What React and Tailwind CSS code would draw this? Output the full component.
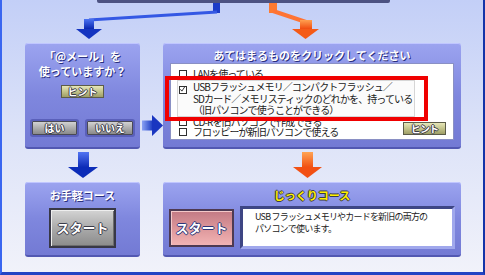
import React from "react";

const whiteShadow = "[text-shadow:1px_1px_0_#2a3080]";
const outlineDark =
  "[text-shadow:1px_0_0_#3a3a48,-1px_0_0_#3a3a48,0_1px_0_#3a3a48,0_-1px_0_#3a3a48]";
const outlineNavy =
  "[text-shadow:1px_0_0_#2c3478,-1px_0_0_#2c3478,0_1px_0_#2c3478,0_-1px_0_#2c3478]";

function Panel({ className, children }) {
  return (
    <div
      className={`relative rounded-[3px] border-b-2 border-[#5258b2] bg-linear-to-b from-[#9ca4f0] via-[#7f87de] to-[#737ad4] shadow-[inset_0_1px_0_#c0c6ff] ${className}`}
    >
      {children}
    </div>
  );
}

function Box({ checked }) {
  return (
    <span className="inline-flex w-[8px] h-[8px] shrink-0 border border-[#303030] bg-white">
      {checked ? (
        <svg viewBox="0 0 8 8" className="w-[6px] h-[6px] overflow-visible">
          <path d="M0.5 3 L2.5 5.5 L6.5 -0.5" stroke="#202020" strokeWidth="1.2" fill="none" />
        </svg>
      ) : null}
    </span>
  );
}

function Item({ children, className }) {
  return (
    <div className={`flex items-center gap-[6px] pl-[8px] ${className}`}>
      <Box />
      <span>{children}</span>
    </div>
  );
}

function SmallButton({ label, className }) {
  return (
    <button
      className={`h-[14px] rounded-[1px] border border-[#4a4a55] bg-linear-to-b from-[#d2d2d2] to-[#8a8a8a] shadow-[0_0_0_2px_#5a60ba] text-white font-bold text-[10px] leading-[12px] ${outlineDark} ${className}`}
    >
      {label}
    </button>
  );
}

function HintButton({ className }) {
  return (
    <button
      className={`w-[43px] h-[13px] border border-[#5c5c48] bg-linear-to-b from-[#e6e6b8] via-[#c4c48c] to-[#9e9e66] text-white font-bold text-[10px] leading-[11px] ${outlineDark} ${className}`}
    >
      ヒント
    </button>
  );
}

export default function App() {
  return (
    <div className="w-[485px] h-[275px] overflow-hidden border-l-2 border-r-2 border-b-[3px] border-l-[#3a66f0] border-r-[#1434a8] border-b-[#2444c4] bg-linear-to-b from-[#c3cff7] via-[#dde3f8] to-[#f1f2fa] font-['Noto_Sans_CJK_JP',sans-serif]">
      {/* connectors from the step above */}
      <div className="h-[43px] flex flex-col">
        <div className="ml-[95px] w-[293px] h-[3px] rounded-b-[2px] bg-[#4c5282]" />
        <svg viewBox="2 3 481 40" width="481" height="40">
          <defs>
            <linearGradient id="bl" x1="0" y1="0" x2="0" y2="1">
              <stop offset="0" stopColor="#4a72f2" />
              <stop offset="1" stopColor="#0a26b0" />
            </linearGradient>
            <linearGradient id="or" x1="0" y1="0" x2="0" y2="1">
              <stop offset="0" stopColor="#ffa050" />
              <stop offset="1" stopColor="#f04c10" />
            </linearGradient>
          </defs>
          <rect x="213" y="3" width="7" height="10" fill="#1c3cc8" />
          <polyline points="217,12 89,20" stroke="#3458e4" strokeWidth="3" fill="none" />
          <rect x="84" y="19" width="10" height="10" fill="url(#bl)" />
          <polygon points="76,29 102,29 89,39" fill="#1434c0" />
          <rect x="269" y="3" width="8" height="10" fill="#ff7a30" />
          <polyline points="273,11 306,22" stroke="#ff7434" strokeWidth="4" fill="none" />
          <rect x="300" y="20" width="12" height="9" fill="url(#or)" />
          <polygon points="292,29 319,29 305.5,39" fill="#f45a18" />
        </svg>
      </div>

      {/* first row */}
      <div className="flex h-[106px] pl-[23px]">
        <Panel className="w-[115px] h-[106px] pt-[6px]">
          <div className={`text-center text-white font-bold text-[11px] leading-[15px] ${whiteShadow}`}>
            「@メール」を
            <br />
            使っていますか？
          </div>
          <HintButton className="block mx-auto mt-[6px]" />
          <div className="flex gap-[10px] pl-[7px] mt-[23px]">
            <SmallButton label="はい" className="w-[45px]" />
            <SmallButton label="いいえ" className="w-[46px]" />
          </div>
        </Panel>

        <div className="w-[23px] pt-[72px] pl-[2px]">
          <svg viewBox="0 0 21 21" width="21" height="21">
            <defs>
              <linearGradient id="ra" x1="0" y1="0" x2="1" y2="0">
                <stop offset="0" stopColor="#8aa2f4" />
                <stop offset="1" stopColor="#1838c0" />
              </linearGradient>
            </defs>
            <rect x="0" y="5.5" width="11" height="10" fill="url(#ra)" />
            <polygon points="10,0 21,10.5 10,21" fill="#1a36c0" />
          </svg>
        </div>

        <Panel className="w-[298px] h-[106px] pt-[5px]">
          <div className={`text-center text-white font-bold text-[11px] leading-[14px] ${whiteShadow}`}>
            あてはまるものをクリックしてください
          </div>
          <div className="mx-[7px] mt-[1px] h-[77px] bg-white border border-[#8a90c4] pt-[4px] text-[10px] tracking-[-0.9px] text-[#1a1a1a]">
            <Item className="leading-[11px]">LANを使っている</Item>
            <div className="ml-[6px] mt-[1px] w-[238px] flex items-start gap-[6px] border border-[#d6d6d6] bg-[#fbfbfb] pl-[1px] leading-[11.5px]">
              <span className="mt-[2px]">
                <Box checked />
              </span>
              <div>
                USBフラッシュメモリ／コンパクトフラッシュ／
                <br />
                SDカード／メモリスティックのどれかを、持っている
                <br />
                （旧パソコンで使うことができる）
              </div>
            </div>
            <div className="flex items-end pr-[7px]">
              <div className="flex-1">
                <Item className="leading-[10px]">CD-Rを旧パソコンで作成できる</Item>
                <Item className="leading-[10px]">フロッピーが新旧パソコンで使える</Item>
              </div>
              <HintButton className="mb-[2px]" />
            </div>
          </div>
          <div className="absolute left-[2px] top-[33px] w-[263px] h-[45px] border-4 border-[#f00000]" />
        </Panel>
      </div>

      {/* down arrows */}
      <svg viewBox="2 149 481 33" width="481" height="33" className="block">
        <defs>
          <linearGradient id="bd" x1="0" y1="0" x2="0" y2="1">
            <stop offset="0" stopColor="#5274f2" />
            <stop offset="1" stopColor="#0a28b4" />
          </linearGradient>
          <linearGradient id="od" x1="0" y1="0" x2="0" y2="1">
            <stop offset="0" stopColor="#ffa454" />
            <stop offset="1" stopColor="#f04c10" />
          </linearGradient>
        </defs>
        <rect x="78" y="152" width="11" height="16" fill="url(#bd)" />
        <polygon points="68,167 98,167 83,178" fill="#0c2cb8" />
        <rect x="302" y="152" width="11" height="16" fill="url(#od)" />
        <polygon points="293,167 322,167 307.5,178" fill="#f25014" />
      </svg>

      {/* second row */}
      <div className="flex h-[75px] pl-[23px]">
        <Panel className="w-[115px] h-[75px] pt-[6px]">
          <div className={`text-center text-white font-bold text-[11px] leading-[14px] ${whiteShadow}`}>
            お手軽コース
          </div>
          <button
            className={`block mx-auto mt-[6px] w-[67px] h-[40px] border-2 border-[#383846] bg-linear-to-b from-[#d4d4d4] via-[#ababab] to-[#8c8c8c] shadow-[inset_1px_1px_0_#eeeeee,inset_-1px_-1px_0_#6c6c6c] text-white font-bold text-[13px] ${outlineDark}`}
          >
            スタート
          </button>
        </Panel>

        <div className="w-[23px]" />

        <Panel className="w-[298px] h-[75px] pt-[6px]">
          <div className={`text-center text-[#fff000] font-bold text-[11px] leading-[14px] ${outlineDark}`}>
            じっくりコース
          </div>
          <div className="flex items-center gap-[6px] px-[6px] mt-[4px]">
            <button
              className={`w-[65px] h-[38px] border-2 border-[#4e3a52] bg-linear-to-b from-[#c27a84] via-[#dc969a] to-[#f2b4b4] shadow-[inset_1px_1px_0_#f4c8c8] text-white font-bold text-[13px] ${outlineNavy}`}
            >
              スタート
            </button>
            <div className="w-[215px] h-[43px] border-[3px] border-t-[#3e4684] border-l-[#3e4684] border-b-[#a0a8ec] border-r-[#a0a8ec] bg-white pl-[12px] pt-[2px] text-[9px] leading-[12px] tracking-[-0.8px] text-[#1a1a1a]">
              USB フラッシュメモリやカードを新旧の両方の
              <br />
              パソコンで使います。
            </div>
          </div>
        </Panel>
      </div>
    </div>
  );
}
